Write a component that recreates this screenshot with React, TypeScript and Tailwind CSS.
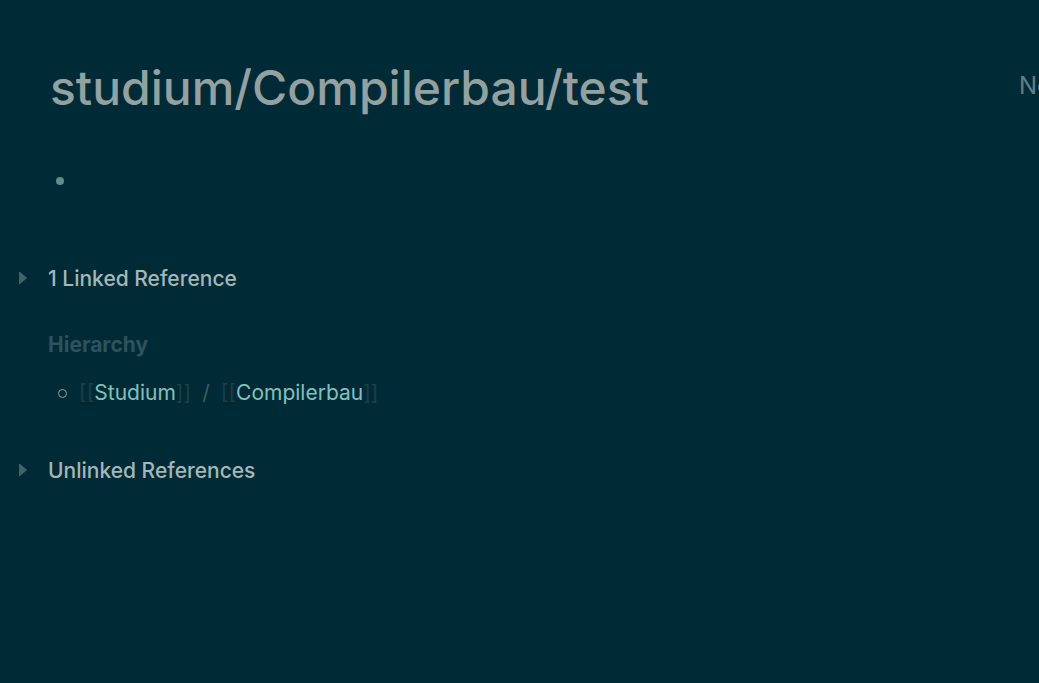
import React from "react";

function Caret() {
  return (
    <svg viewBox="0 0 8 14" className="mb-[2px] h-[14px] w-2 shrink-0 fill-[#41636a]" aria-hidden="true">
      <path d="M0 1.500v11c0 .7.6.9 1 .5L7.600 7.600c.4-.4.4-.8 0-1.200L1 1C.6.6 0 .8 0 1.500z" />
    </svg>
  );
}

function Section({ title }: { title: string }) {
  return (
    <button type="button" className="flex h-8 items-center gap-[21px] text-left text-[21px] font-medium text-[#a4b8b8]">
      <Caret />
      <span>{title}</span>
    </button>
  );
}

function PageRef({ name }: { name: string }) {
  return (
    <span className="text-[#1c3f48]">
      [[<a href={`#${name}`} className="text-[#82c0bf]">{name}</a>]]
    </span>
  );
}

export default function App() {
  return (
    <main className="min-h-screen overflow-hidden bg-[#002b36] pt-14 font-['Inter',sans-serif]">
      <header className="flex items-start justify-between pl-[50px]">
        <h1 className="text-[48px] leading-16 font-medium text-[#93a1a1]">studium/Compilerbau/test</h1>
        <div className="w-5 overflow-hidden pt-3 text-2xl leading-9 whitespace-nowrap text-[#647f84]">No</div>
      </header>
      <ul className="mt-[45px] flex h-8 items-center pl-14">
        <li className="size-2 rounded-full bg-[#5e8b8b]" />
      </ul>
      <div className="mt-[66px] pl-[19px]">
        <Section title="1 Linked Reference" />
      </div>
      <section className="mt-[34px] pl-12">
        <h2 className="text-[21px] leading-8 font-bold text-[#2f525b]">Hierarchy</h2>
        <ul className="mt-4">
          <li className="flex h-8 items-center gap-3 pl-[10px] text-[21px]">
            <span className="size-[9px] rounded-full border border-[#93a1a1]" />
            <span className="flex gap-[11px]">
              <PageRef name="Studium" />
              <span className="text-[#3b5d65]">/</span>
              <PageRef name="Compilerbau" />
            </span>
          </li>
        </ul>
      </section>
      <div className="mt-[46px] pl-[19px]">
        <Section title="Unlinked References" />
      </div>
    </main>
  );
}
